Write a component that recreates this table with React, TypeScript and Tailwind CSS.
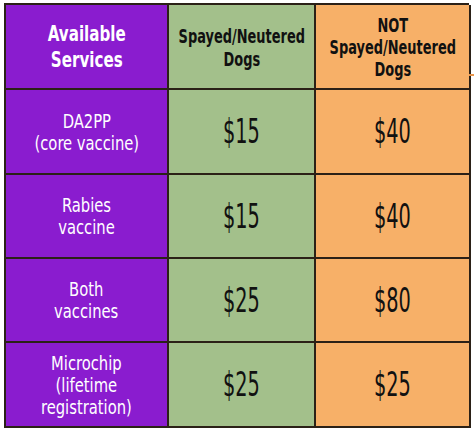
const rows = [
  { label: ['DA2PP', '(core vaccine)'], fixed: '$15', intact: '$40' },
  { label: ['Rabies', 'vaccine'], fixed: '$15', intact: '$40' },
  { label: ['Both', 'vaccines'], fixed: '$25', intact: '$80' },
  { label: ['Microchip', '(lifetime', 'registration)'], fixed: '$25', intact: '$25' },
];

const font = { fontFamily: '"DejaVu Sans Condensed", "Liberation Sans", sans-serif' };

const cell = 'flex items-center justify-center border-r-2 border-b-2 border-[#2b2117] text-center';

export default function App() {
  return (
    <div className="relative w-[474px] h-[431px] bg-white pl-[4px] pt-[3px]" style={font}>
      <div className="grid grid-cols-[163px_147px_155px] grid-rows-[85px_85px_84px_84px_85px] w-[465px] border-l-2 border-t-2 border-[#2b2117]">
        <div className={`${cell} bg-[#8a1ccf] text-white`}>
          <div className="inline-block scale-x-[0.8] font-bold text-[21px] leading-[26px] whitespace-nowrap">
            Available<br />Services
          </div>
        </div>
        <div className={`${cell} bg-[#a3c08b] text-[#111]`}>
          <div className="inline-block scale-x-[0.72] font-bold text-[20px] leading-[23px] whitespace-nowrap pt-[2px]">
            Spayed/Neutered<br />Dogs
          </div>
        </div>
        <div className={`${cell} bg-[#f7b068] text-[#111]`}>
          <div className="inline-block scale-x-[0.72] font-bold text-[20px] leading-[22px] whitespace-nowrap">
            NOT<br />Spayed/Neutered<br />Dogs
          </div>
        </div>
        {rows.map((r) => (
          <>
            <div key={r.label[0]} className={`${cell} bg-[#8a1ccf] text-white`}>
              <div className="inline-block scale-x-[0.82] text-[20px] leading-[22px] whitespace-nowrap">
                {r.label.map((l) => (
                  <div key={l}>{l}</div>
                ))}
              </div>
            </div>
            <div className={`${cell} bg-[#a3c08b] text-[#111]`}>
              <span className="inline-block scale-x-[0.65] text-[33px] leading-none">{r.fixed}</span>
            </div>
            <div className={`${cell} bg-[#f7b068] text-[#111]`}>
              <span className="inline-block scale-x-[0.65] text-[33px] leading-none">{r.intact}</span>
            </div>
          </>
        ))}
      </div>
      <div className="absolute right-0 top-[74px] w-[5px] h-[2px] bg-[#e8944a]" />
    </div>
  );
}
